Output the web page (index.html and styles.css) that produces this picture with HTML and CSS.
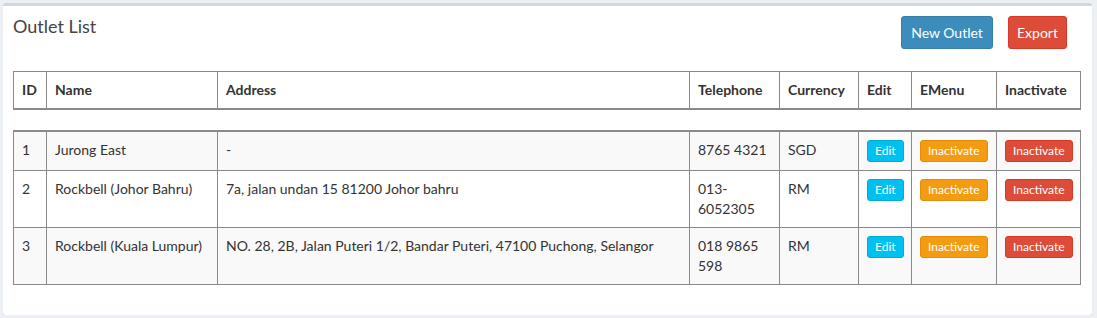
FILE: index.html
```html
<!DOCTYPE html>
<html lang="en">
<head>
  <meta charset="UTF-8">
  <title>Outlet List</title>
  <link rel="stylesheet" href="styles.css">
</head>
<body>
  <div class="box">
    <div class="box-header">
      <h3 class="box-title">Outlet List</h3>
      <div class="box-tools">
        <button class="btn btn-primary">New Outlet</button>
        <button class="btn btn-danger">Export</button>
      </div>
    </div>

    <div class="box-body">
      <table class="grid grid-head">
        <colgroup>
          <col class="c-id"><col class="c-name"><col class="c-addr"><col class="c-tel">
          <col class="c-cur"><col class="c-edit"><col class="c-menu"><col class="c-inact">
        </colgroup>
        <thead>
          <tr>
            <th>ID</th>
            <th>Name</th>
            <th>Address</th>
            <th>Telephone</th>
            <th>Currency</th>
            <th>Edit</th>
            <th>EMenu</th>
            <th>Inactivate</th>
          </tr>
        </thead>
      </table>

      <table class="grid grid-rows">
        <colgroup>
          <col class="c-id"><col class="c-name"><col class="c-addr"><col class="c-tel">
          <col class="c-cur"><col class="c-edit"><col class="c-menu"><col class="c-inact">
        </colgroup>
        <tbody>
          <tr>
            <td>1</td>
            <td>Jurong East</td>
            <td>-</td>
            <td>8765 4321</td>
            <td>SGD</td>
            <td><button class="btn-xs btn-info">Edit</button></td>
            <td><button class="btn-xs btn-warning">Inactivate</button></td>
            <td><button class="btn-xs btn-danger">Inactivate</button></td>
          </tr>
          <tr>
            <td>2</td>
            <td>Rockbell (Johor Bahru)</td>
            <td>7a, jalan undan 15 81200 Johor bahru</td>
            <td>013-6052305</td>
            <td>RM</td>
            <td><button class="btn-xs btn-info">Edit</button></td>
            <td><button class="btn-xs btn-warning">Inactivate</button></td>
            <td><button class="btn-xs btn-danger">Inactivate</button></td>
          </tr>
          <tr>
            <td>3</td>
            <td>Rockbell (Kuala Lumpur)</td>
            <td>NO. 28, 2B, Jalan Puteri 1/2, Bandar Puteri, 47100 Puchong, Selangor</td>
            <td>018 9865 598</td>
            <td>RM</td>
            <td><button class="btn-xs btn-info">Edit</button></td>
            <td><button class="btn-xs btn-warning">Inactivate</button></td>
            <td><button class="btn-xs btn-danger">Inactivate</button></td>
          </tr>
        </tbody>
      </table>
    </div>
  </div>
</body>
</html>
```

FILE: styles.css
```css
body {
  margin: 0;
  padding: 3px 5px 0 3px;
  background-color: #ecf0f5;
  font-family: 'Lato', 'Liberation Sans', sans-serif;
  font-size: 14px;
  line-height: 20px;
  color: #333;
}

.box {
  background-color: #fff;
  border-top: 3px solid #d2d6de;
  border-radius: 3px;
  box-shadow: 0 1px 1px rgba(0, 0, 0, 0.1);
  height: 312px;
  box-sizing: border-box;
}

.box-header {
  display: flex;
  justify-content: space-between;
  align-items: flex-start;
  padding: 10px 25px 0 10px;
  height: 65px;
  box-sizing: border-box;
}

.box-title {
  margin: 0;
  font-size: 18px;
  font-weight: normal;
  line-height: 20px;
  color: #444;
}

.box-tools {
  display: flex;
  gap: 15px;
}

.btn {
  height: 33px;
  padding: 0;
  font-family: inherit;
  font-size: 14px;
  color: #fff;
  white-space: nowrap;
  border: 1px solid transparent;
  border-radius: 3px;
  cursor: pointer;
}

.btn-primary {
  width: 92px;
  background-color: #3c8dbc;
  border-color: #367fa9;
}

.btn-danger {
  width: 59px;
  background-color: #dd4b39;
  border-color: #d73925;
}

.box-body {
  padding: 0 10px;
}

.grid {
  table-layout: fixed;
  border-collapse: collapse;
  width: 1067px;
}

.c-id { width: 33px; }
.c-name { width: 171px; }
.c-addr { width: 472px; }
.c-tel { width: 90px; }
.c-cur { width: 79px; }
.c-edit { width: 53px; }
.c-menu { width: 85px; }
.c-inact { width: 84px; }

.grid th,
.grid td {
  border: 1px solid #8a8a8a;
  padding: 8px;
  text-align: left;
  vertical-align: top;
}

.grid th {
  font-weight: bold;
  color: #333;
  border-bottom: 2px solid #8a8a8a;
}

.grid-rows {
  margin-top: 20px;
}

.grid-rows tbody tr:first-child td {
  border-top: 2px solid #8a8a8a;
}

.grid-rows tbody tr:nth-child(odd) {
  background-color: #f9f9f9;
}

.btn-xs {
  display: block;
  padding: 1px 7px;
  font-family: inherit;
  font-size: 12px;
  line-height: 18px;
  color: #fff;
  white-space: nowrap;
  border: 1px solid transparent;
  border-radius: 3px;
  cursor: pointer;
}

.btn-info {
  background-color: #00c0ef;
  border-color: #00acd6;
}

.btn-warning {
  background-color: #f39c12;
  border-color: #e08e0b;
}

.btn-xs.btn-danger {
  width: auto;
  background-color: #dd4b39;
  border-color: #d73925;
}
```
